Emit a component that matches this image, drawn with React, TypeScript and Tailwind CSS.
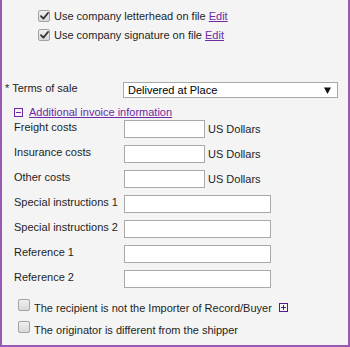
import React from "react";

function CheckBox({ checked }: { checked?: boolean }) {
  return (
    <span className="relative flex h-[12px] w-[12px] shrink-0 items-center justify-center rounded-[2px] border border-[#a3a3a3] bg-gradient-to-b from-[#f0f0f0] to-[#d8d8d8]">
      {checked && (
        <svg width="9" height="8" viewBox="0 0 9 8" className="block">
          <path d="M1 4.2 L3.4 6.6 L8 1" fill="none" stroke="#333" strokeWidth="1.8" strokeLinecap="round" strokeLinejoin="round" />
        </svg>
      )}
    </span>
  );
}

function SmallInput({ w }: { w: string }) {
  return <div className={`h-[18px] shrink-0 border border-[#a9a9a9] bg-white ${w}`} />;
}

const Field = ({ label, long }: { label: string; long?: boolean }) => (
  <div className="flex h-[18px] items-start">
    <div className="w-[110px] shrink-0 leading-[14px]">{label}</div>
    {long ? (
      <div className="h-[18px] w-[147px] shrink-0 border border-[#a9a9a9] bg-white" />
    ) : (
      <div className="flex items-center">
        <div className="h-[18px] w-[81px] shrink-0 border border-[#a9a9a9] bg-white" />
        <span className="ml-[3px] leading-[18px]">US Dollars</span>
      </div>
    )}
  </div>
);

export default function App() {
  return (
    <div
      className="box-border h-[347px] w-[350px] overflow-hidden border-b-2 border-l-2 border-r-2 border-[#9b59b6] bg-[#f4f4f4] text-[11px] text-[#1e1e1e]"
      style={{ fontFamily: '"Liberation Sans", Arial, sans-serif' }}
    >
      <div className="pl-[36px] pt-[6px]">
        <div className="flex h-[19px] items-center gap-[4px]">
          <CheckBox checked />
          <span className="leading-[14px]">
            Use company letterhead on file{" "}
            <span className="text-[#6e2aa3] underline">Edit</span>
          </span>
        </div>
        <div className="flex h-[19px] items-center gap-[4px]">
          <CheckBox checked />
          <span className="leading-[14px]">
            Use company signature on file{" "}
            <span className="text-[#6e2aa3] underline">Edit</span>
          </span>
        </div>
      </div>

      <div className="mt-[38px] flex items-start pl-[3px]">
        <div className="-mt-[1px] w-[118px] shrink-0 leading-[14px]">* Terms of sale</div>
        <div className="flex h-[16px] w-[215px] items-center justify-between border border-[#a9a9a9] bg-white pl-[4px] pr-[6px]">
          <span className="leading-[14px] text-black">Delivered at Place</span>
          <svg width="7" height="7" viewBox="0 0 7 7" className="block">
            <polygon points="0,0.5 7,0.5 3.5,7" fill="#111" />
          </svg>
        </div>
      </div>

      <div className="mt-[7px] flex h-[14px] items-center pl-[12px]">
        <span className="relative flex h-[9px] w-[9px] shrink-0 items-center justify-center border border-[#6e2aa3]">
          <span className="block h-[1px] w-[5px] bg-[#6e2aa3]" />
        </span>
        <span className="ml-[6px] leading-[14px] text-[#6e2aa3] underline">Additional invoice information</span>
      </div>

      <div className="mt-[1px] flex flex-col gap-[7px] pl-[12px]">
        <Field label="Freight costs" />
        <Field label="Insurance costs" />
        <Field label="Other costs" />
        <Field label="Special instructions 1" long />
        <Field label="Special instructions 2" long />
        <Field label="Reference 1" long />
        <Field label="Reference 2" long />
      </div>

      <div className="mt-[11px] flex flex-col gap-[10px] pl-[16px]">
        <div className="flex h-[12px] items-start">
          <CheckBox />
          <span className="ml-[4px] mt-[2px] whitespace-nowrap leading-[14px]">
            The recipient is not the Importer of Record/Buyer
          </span>
          <span className="ml-[7px] mt-[4px] flex h-[9px] w-[9px] shrink-0 items-center justify-center border border-[#5a1a8c]">
            <svg width="7" height="7" viewBox="0 0 7 7" className="block">
              <path d="M3.5 1 V6 M1 3.5 H6" stroke="#5a1a8c" strokeWidth="1" />
            </svg>
          </span>
        </div>
        <div className="flex h-[12px] items-start">
          <CheckBox />
          <span className="ml-[4px] mt-[2px] whitespace-nowrap leading-[14px]">
            The originator is different from the shipper
          </span>
        </div>
      </div>
    </div>
  );
}
